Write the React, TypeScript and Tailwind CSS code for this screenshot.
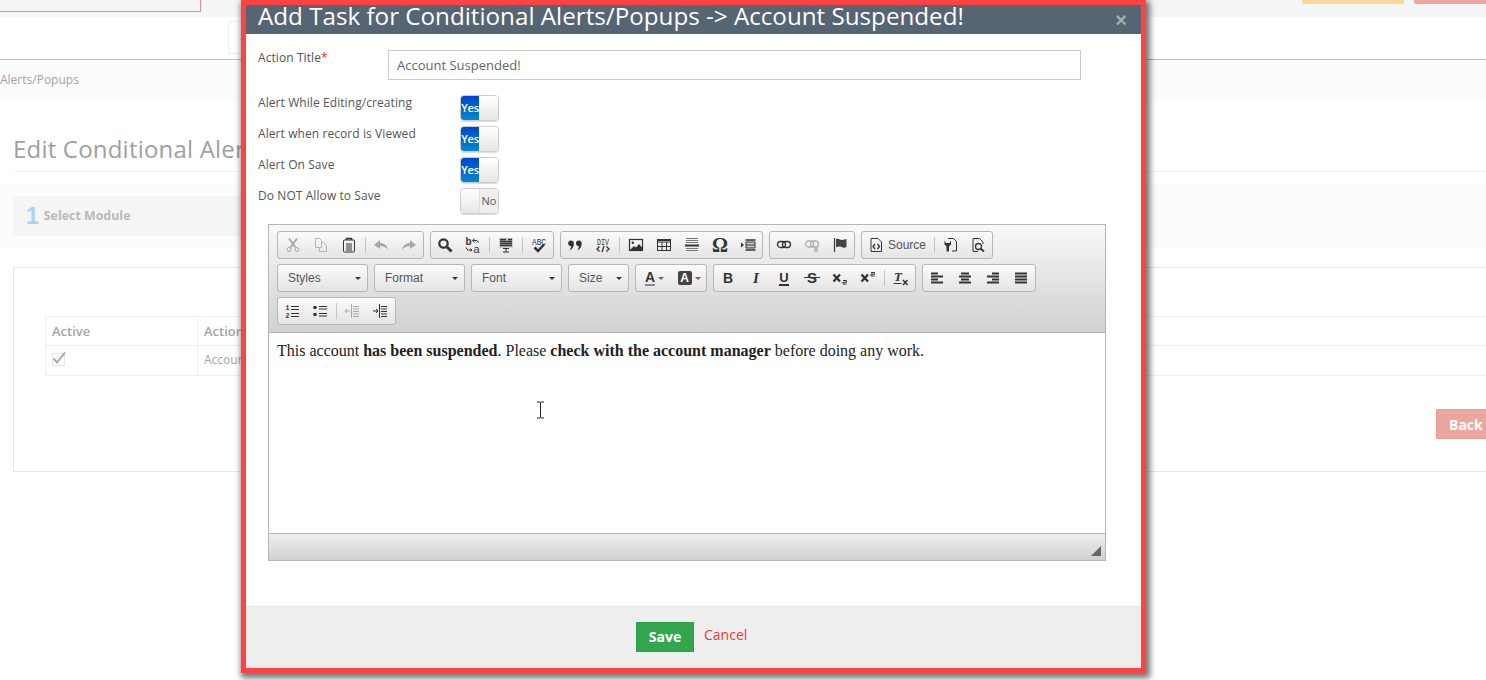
import React from "react";

const I = ({ children, className = "text-[#333]" }: { children: React.ReactNode; className?: string }) => (
  <svg width="16" height="16" viewBox="0 0 16 16" fill="none" stroke="currentColor" strokeWidth="1" className={className}>
    {children}
  </svg>
);

const Btn = ({ children, w = "w-[28px]" }: { children: React.ReactNode; w?: string }) => (
  <div className={`flex h-[26px] ${w} shrink-0 items-center justify-center`}>{children}</div>
);

const Sep = ({ wide = false }: { wide?: boolean }) => (
  <div className={`flex h-[26px] ${wide ? "w-[5px]" : "w-[4px]"} shrink-0 justify-center py-[5px]`}>
    <div className="w-px bg-[#c4c4c4]" />
  </div>
);

const Group = ({ children, w }: { children: React.ReactNode; w: string }) => (
  <div className={`flex h-[28px] ${w} shrink-0 items-center rounded-[3px] border border-[#b6b6b6] bg-linear-to-b from-[#fbfbfb] to-[#e4e4e4]`}>
    {children}
  </div>
);

const Combo = ({ label, w }: { label: string; w: string }) => (
  <div className={`flex h-[28px] ${w} shrink-0 items-center justify-between rounded-[3px] border border-[#b6b6b6] bg-linear-to-b from-[#fbfbfb] to-[#e4e4e4] pl-[10px] pr-[6px] font-['Liberation_Sans',sans-serif] text-[12px] text-[#555]`}>
    <span>{label}</span>
    <span className="h-0 w-0 border-x-[3px] border-t-[3px] border-x-transparent border-t-[#333]" />
  </div>
);

const Caret = () => <span className="ml-[3px] h-0 w-0 border-x-[3px] border-t-[3px] border-x-transparent border-t-[#666]" />;

const Lines = ({ rows }: { rows: [number, number][] }) => (
  <I>
    {rows.map(([a, b], i) => (
      <path key={i} d={`M${a} ${3.5 + i * 3}H${b}`} strokeWidth="2" />
    ))}
  </I>
);

const Cut = () => (
  <I className="text-[#a8a8a8]">
    <path d="M4 1.5l6.5 9M12 1.5l-6.500 9" strokeWidth="2" />
    <circle cx="4" cy="12.5" r="2" />
    <circle cx="12" cy="12.5" r="2" />
  </I>
);
const Copy = () => (
  <I className="text-[#b4b4b4]">
    <path d="M2.5 1.5h4l2 2v7h-6zM8.5 5.5h2l3 3v6h-7v-4" />
  </I>
);
const Paste = () => (
  <I>
    <path d="M3.5 3h9a1 1 0 0 1 1 1v10a1 1 0 0 1-1 1h-9a1 1 0 0 1-1-1V4a1 1 0 0 1 1-1z" />
    <path d="M5.5 3V1.5h5V3" strokeWidth="1.5" />
    <path d="M5 7h6M5 9h6M5 11h6M5 13h6" />
  </I>
);
const Undo = ({ flip = false, cls = "text-[#a8a8a8]" }: { flip?: boolean; cls?: string }) => (
  <I className={cls}>
    <path d={flip ? "M15 8L9 3v3C5 6 2 8 1 13c2-3 5-4 8-4v3z" : "M1 8l6-5v3c4 0 7 2 8 7-2-3-5-4-8-4v3z"} fill="currentColor" stroke="none" />
  </I>
);
const Find = () => (
  <I>
    <circle cx="6.5" cy="6.5" r="4.2" strokeWidth="2.2" />
    <path d="M10 10l4.5 4.5" strokeWidth="2.8" />
  </I>
);
const Replace = () => (
  <svg width="16" height="16" viewBox="0 0 16 16" className="text-[#333]">
    <text x="0.5" y="8" fontSize="10" fontFamily="Liberation Sans" fontWeight="700" fill="currentColor">b</text>
    <text x="8.5" y="15.5" fontSize="11" fontFamily="Liberation Sans" fill="currentColor">a</text>
    <path d="M8 3.500h3.500l2.500 2M9.500 1.500l-2 2 2 2M1 10.500l1.500 2.500H7M5.500 11.500L7 13l-1.500 1.500" fill="none" stroke="currentColor" />
  </svg>
);
const SelectAll = () => (
  <I>
    <rect x="1" y="1" width="14" height="10" fill="#cfcfcf" stroke="none" />
    <path d="M2 2.500h6M10 2.500h4M2 4.500h12M2 6.500h12M2 8.500h12" strokeWidth="1.300" />
    <path d="M5 11.500h6M5 15h6M8 11.500V15" />
  </I>
);
const Spell = () => (
  <svg width="16" height="16" viewBox="0 0 16 16" className="text-[#333]">
    <text x="1" y="7.500" fontSize="8.500" fontFamily="Liberation Mono" fill="currentColor" textLength="14" lengthAdjust="spacingAndGlyphs">ABC</text>
    <path d="M3.500 10.500l3.500 3.500 6-6.500" fill="none" stroke="currentColor" strokeWidth="2.500" />
  </svg>
);
const Quote = () => (
  <svg width="16" height="16" viewBox="0 0 16 16" className="text-[#333]">
    <circle cx="4" cy="6.300" r="2.800" fill="currentColor" />
    <path d="M6.800 6.300c0 3.500-1.300 6-4.300 7.200 1.200-1.600 1.500-3 1.500-4.500z" fill="currentColor" />
    <circle cx="11.800" cy="6.300" r="2.800" fill="currentColor" />
    <path d="M14.600 6.300c0 3.500-1.300 6-4.300 7.200 1.200-1.600 1.500-3 1.500-4.500z" fill="currentColor" />
  </svg>
);
const Div = () => (
  <svg width="16" height="16" viewBox="0 0 16 16" className="text-[#333]">
    <text x="2" y="7.500" fontSize="8.500" fontFamily="Liberation Mono" fill="currentColor" textLength="12" lengthAdjust="spacingAndGlyphs">DIV</text>
    <path d="M4.500 9.500L2 12l2.500 2.500M11.500 9.500L14 12l-2.500 2.500M9 9l-2 6" fill="none" stroke="currentColor" strokeWidth="1.300" />
  </svg>
);
const Img = () => (
  <I>
    <rect x="1.500" y="2.500" width="13" height="11" strokeWidth="1.200" />
    <circle cx="4.800" cy="5.800" r="1.200" fill="currentColor" stroke="none" />
    <path d="M2 13l4-4 2 1.500L11 7l3.500 4v2.500H2z" fill="currentColor" stroke="none" />
  </I>
);
const Table = () => (
  <I>
    <rect x="1.500" y="2.500" width="13" height="11" />
    <path d="M1.500 3.500h13M1.500 5h13" />
    <path d="M1.500 9.500h13M6 5v8.500M10.500 5v8.500" />
  </I>
);
const Hr = () => (
  <I>
    <path d="M2 1.500h12M2 3.500h12M2 5.500h12M2 11.500h12M2 13.500h12" stroke="#777" />
    <path d="M1 8.500h14" strokeWidth="2" />
  </I>
);
const Iframe = () => (
  <I>
    <path d="M1 5.500l3 2.500-3 2.500z" fill="currentColor" stroke="none" />
    <path d="M5.500 3h10M5.500 13h10" strokeWidth="1.600" />
    <path d="M6 5h9v6H6z" strokeWidth="1" fill="#ccc" />
    <path d="M6 8h9" />
  </I>
);
const LinkI = ({ cls = "text-[#333]", x = false }: { cls?: string; x?: boolean }) => (
  <I className={cls}>
    <rect x="1.500" y={x ? 4 : 4.500} width="8" height="6" rx="3" strokeWidth="1.300" />
    <rect x="6.500" y={x ? 4 : 4.500} width="8" height="6" rx="3" strokeWidth="1.300" />
    {x && <path d="M10 10l4 5M14 10l-4 5" strokeWidth="1.300" />}
  </I>
);
const Flag = () => (
  <I>
    <path d="M2.500 1v14" strokeWidth="1.200" />
    <path d="M4 2c3-1 4 1 6 1s3-1 4.500-1v8c-2 1-3 1-5 0s-3 0-5.500 0z" fill="#444" stroke="none" />
  </I>
);
const SourceI = () => (
  <I>
    <path d="M3 1.500h7l3.500 3.500v9.500H3z" />
    <path d="M7 7L5 9.500 7 12M9.500 7l2 2.500-2 2.500" strokeWidth="1.300" />
  </I>
);
const Templates = () => (
  <I>
    <path d="M6 1.500h5.500l3 3v9.500H10" />
    <path d="M2.500 3.500v4l2 2v5h2.500v-5l2-2v-4L7.500 6H4z" fill="currentColor" stroke="none" />
  </I>
);
const Preview = () => (
  <I>
    <path d="M3 1.500h6.500l3.500 3.500v2M3 1.500v13h5" />
    <circle cx="8.500" cy="9.500" r="3" strokeWidth="1.300" />
    <path d="M10.500 11.500l3.500 3" strokeWidth="1.800" />
  </I>
);
const Sub = ({ sup = false }: { sup?: boolean }) => (
  <I>
    <path d="M1.500 4.500l6.500 7M8 4.500l-6.500 7" strokeWidth="2.300" />
    <path d={sup ? "M11 2.500h3.500v1.700H11v1.800h3.500" : "M11 10.500h3.500v1.700H11v1.800h3.500"} strokeWidth="1" />
  </I>
);
const ClearF = () => (
  <svg width="16" height="16" viewBox="0 0 16 16" className="text-[#333]">
    <text x="1" y="11" fontSize="13" fontFamily="Liberation Serif" fontWeight="700" fontStyle="italic" fill="currentColor">T</text>
    <path d="M0.500 13.500h8" stroke="currentColor" />
    <path d="M10 10l4.500 5M14.500 10L10 15" stroke="currentColor" strokeWidth="1.500" fill="none" />
  </svg>
);
const ListOl = () => (
  <svg width="16" height="16" viewBox="0 0 16 16" className="text-[#333]">
    <text x="1.500" y="7" fontSize="6.500" fontFamily="Liberation Mono" fontWeight="700" fill="currentColor">1</text>
    <text x="1.500" y="14.500" fontSize="6.500" fontFamily="Liberation Mono" fontWeight="700" fill="currentColor">2</text>
    <path d="M7 3.500h8M7 6.500h8M7 10.500h8M7 13.500h8" stroke="currentColor" strokeWidth="1.200" />
  </svg>
);
const ListUl = () => (
  <I>
    <circle cx="3" cy="4.500" r="1.800" fill="currentColor" stroke="none" />
    <circle cx="3" cy="11.500" r="1.800" fill="currentColor" stroke="none" />
    <path d="M7 3.500h8M7 6h8M7 10.500h8M7 13h8" strokeWidth="1.200" />
  </I>
);
const Outdent = ({ on = false }: { on?: boolean }) => (
  <I className={on ? "text-[#333]" : "text-[#a8a8a8]"}>
    <path d={on ? "M1 8h5M4 6l2 2-2 2" : "M6 8H1M3 6L1 8l2 2"} />
    <path d="M7.500 1v14" />
    <path d="M9 3.500h6M9 6h6M9 8.500h6M9 11h6M9 13.500h6" />
  </I>
);

const Toggle = ({ on }: { on: boolean }) => (
  <div className="flex h-[26px] w-[39px] overflow-hidden rounded-[4px] border border-[#ccc] shadow-[0_1px_1px_rgba(0,0,0,0.15)]">
    {on ? (
      <>
        <div className="flex w-[18px] items-center justify-center bg-linear-to-b from-[#0044cc] to-[#0088cc] pt-px text-[11px] font-semibold tracking-[-0.2px] text-white">Yes</div>
        <div className="flex-1 bg-linear-to-b from-white to-[#e6e6e6]" />
      </>
    ) : (
      <>
        <div className="w-[19px] border-r border-[#ddd] bg-linear-to-b from-white to-[#e6e6e6]" />
        <div className="flex flex-1 items-center justify-center bg-[#eee] pt-px text-[11px] text-[#555]">No</div>
      </>
    )}
  </div>
);

const ToggleRow = ({ label, on }: { label: string; on: boolean }) => (
  <div className="flex h-[26px] items-start">
    <div className="w-[202px] pt-px text-[12px] leading-[14px] tracking-[0.08px] text-[#555]">{label}</div>
    <Toggle on={on} />
  </div>
);

const Background = () => (
  <div className="w-[1486px]">
    <div className="flex h-[17px] items-start justify-between bg-[#f4f5f7]">
      <div className="h-[12px] w-[201px] border-b border-r border-[#f58a8a]" />
      <div className="flex gap-[10px]">
        <div className="h-[4px] w-[102px] rounded-b-[2px] bg-[#fdd49b]" />
        <div className="h-[4px] w-[72px] rounded-bl-[2px] bg-[#eca6a0]" />
      </div>
    </div>
    <div className="h-[43px] border-b border-[#f2ab98] bg-white pl-[228px] pt-[4px]">
      <div className="h-[33px] w-[30px] border border-[#eee]" />
    </div>
    <div className="flex h-[41px] items-center bg-[#fcfcfc] pb-[2px] text-[12px] text-[#a3a3a3]">Alerts/Popups</div>
    <div className="ml-[13px] h-[71px] border-b border-[#f2f2f2] pt-[31px] text-[24px] leading-[33px] tracking-[0.2px] text-[#a0a0a0]">Edit Conditional Alerts</div>
    <div className="mt-[11px] h-[65px] bg-[#fcfcfc] pl-[13px] pt-[13px]">
      <div className="flex h-[40px] w-[1000px] items-center gap-[6px] bg-[#f5f5f5] pl-[13px]">
        <span className="font-['Liberation_Sans',sans-serif] text-[23px] font-bold text-[#a9d2f7]">1</span>
        <span className="-ml-px text-[12.4px] font-bold text-[#b9b9b9]">Select Module</span>
      </div>
    </div>
    <div className="ml-[13px] mt-[19px] h-[205px] w-[1500px] border border-[#e6e6e6]">
      <div className="ml-[31px] mt-[48px] border-l border-[#eee] text-[13px] text-[#a5a5a5]">
        <div className="flex h-[30px] items-center border-y border-[#eee] font-semibold">
          <div className="flex h-full w-[152px] items-center border-r border-[#eee] pl-[6px] pt-[2px]">Active</div>
          <div className="pl-[6px] pt-[2px]">Action</div>
        </div>
        <div className="flex h-[30px] items-center border-b border-[#eee] text-[12px]">
          <div className="flex h-full w-[152px] items-center border-r border-[#eee] pb-[2px] pl-[6px]">
            <div className="flex h-[13px] w-[13px] items-center justify-center border border-[#e4e4e4]">
              <svg width="14" height="14" viewBox="0 0 14 14" className="-mt-[3px] shrink-0 overflow-visible text-[#a8a8a8]">
                <path d="M1.500 7.500l3.500 4 8-10" fill="none" stroke="currentColor" strokeWidth="2" />
              </svg>
            </div>
          </div>
          <div className="pb-[2px] pl-[6px]">Account Suspended!</div>
        </div>
      </div>
      <div className="ml-[1422px] mt-[33px] flex h-[30px] w-[70px] items-center rounded-[1px] border border-[#e89d96] bg-[#eca6a0] pl-[12px] text-[14px] font-bold text-white">Back</div>
    </div>
  </div>
);

const Editor = () => (
  <div className="ml-[22px] mt-[10px] w-[838px] border border-[#b6b6b6] bg-white">
    <div className="flex h-[108px] flex-col gap-[5px] border-b border-[#b6b6b6] bg-linear-to-b from-[#f8f8f8] to-[#d0d2cf] pl-[8px] pt-[6px]">
      <div className="flex gap-[6px]">
        <Group w="w-[147px] pl-px">
          <Btn><Cut /></Btn>
          <Btn><Copy /></Btn>
          <Btn><Paste /></Btn>
          <Sep />
          <Btn><Undo /></Btn>
          <Btn><Undo flip /></Btn>
        </Group>
        <Group w="w-[124px]">
          <Btn><Find /></Btn>
          <Btn><Replace /></Btn>
          <Sep wide />
          <Btn><SelectAll /></Btn>
          <Sep wide />
          <Btn><Spell /></Btn>
        </Group>
        <Group w="w-[203px]">
          <Btn><Quote /></Btn>
          <Btn><Div /></Btn>
          <Sep wide />
          <Btn><Img /></Btn>
          <Btn><Table /></Btn>
          <Btn><Hr /></Btn>
          <Btn><span className="font-['Liberation_Serif',serif] text-[20px] font-bold leading-none text-[#333]">Ω</span></Btn>
          <Btn><Iframe /></Btn>
        </Group>
        <Group w="w-[86px]">
          <Btn><LinkI /></Btn>
          <Btn><LinkI cls="text-[#b0b0b0]" x /></Btn>
          <Btn><Flag /></Btn>
        </Group>
        <Group w="w-[132px]">
          <Btn w="w-[70px] justify-start pl-[6px] gap-[4px]">
            <SourceI />
            <span className="font-['Liberation_Sans',sans-serif] text-[12px] text-[#555]">Source</span>
          </Btn>
          <Sep />
          <Btn><Templates /></Btn>
          <Btn><Preview /></Btn>
        </Group>
      </div>
      <div className="flex gap-[6px]">
        <Combo label="Styles" w="w-[91px]" />
        <Combo label="Format" w="w-[91px]" />
        <Combo label="Font" w="w-[91px]" />
        <Combo label="Size" w="w-[61px]" />
        <Group w="w-[72px] pl-px">
          <Btn w="w-[35px]">
            <div className="flex items-center">
              <span className="border-b-[2px] border-[#888] font-['Liberation_Sans',sans-serif] text-[14px] font-bold leading-[13px] text-[#333]">A</span>
              <Caret />
            </div>
          </Btn>
          <Btn w="w-[34px]">
            <div className="flex items-center">
              <span className="flex h-[14px] w-[14px] items-center justify-center rounded-[2px] bg-[#444] font-['Liberation_Sans',sans-serif] text-[12px] font-bold text-white">A</span>
              <Caret />
            </div>
          </Btn>
        </Group>
        <Group w="w-[203px]">
          <Btn><span className="font-['Liberation_Sans',sans-serif] text-[14px] font-bold text-[#333]">B</span></Btn>
          <Btn><span className="font-['Liberation_Serif',serif] text-[15px] font-bold italic text-[#333]">I</span></Btn>
          <Btn><span className="border-b-[2px] border-[#333] font-['Liberation_Sans',sans-serif] text-[13px] font-bold leading-[13px] text-[#333]">U</span></Btn>
          <Btn>
            <span className="relative font-['Liberation_Sans',sans-serif] text-[15px] font-bold text-[#333]">
              S
              <span className="absolute left-[-3px] right-[-3px] top-[10px] h-[1px] bg-[#333]" />
            </span>
          </Btn>
          <Btn><Sub /></Btn>
          <Btn><Sub sup /></Btn>
          <Sep wide />
          <Btn><ClearF /></Btn>
        </Group>
        <Group w="w-[114px]">
          <Btn><Lines rows={[[2, 9], [2, 14], [2, 9], [2, 14]]} /></Btn>
          <Btn><Lines rows={[[4, 12], [2, 14], [4, 12], [2, 14]]} /></Btn>
          <Btn><Lines rows={[[7, 14], [2, 14], [7, 14], [2, 14]]} /></Btn>
          <Btn><Lines rows={[[2, 14], [2, 14], [2, 14], [2, 14]]} /></Btn>
        </Group>
      </div>
      <div className="flex">
        <Group w="w-[119px]">
          <Btn><ListOl /></Btn>
          <Btn><ListUl /></Btn>
          <Sep />
          <Btn><Outdent /></Btn>
          <Btn><Outdent on /></Btn>
        </Group>
      </div>
    </div>
    <div className="relative h-[200px] px-[8px] pt-[9px] font-['Liberation_Serif',serif] text-[16px] leading-[18px] text-[#222]">
      This account <b>has been suspended</b>. Please <b>check with the account manager</b> before doing any work.
      <svg width="9" height="18" viewBox="0 0 9 18" className="absolute left-[267px] top-[68px] text-[#222]">
        <path d="M1 1h3l.5.5L5 1h3M4.500 1.500v15M1 17h3l.5-.5.5.5h3" fill="none" stroke="currentColor" />
      </svg>
    </div>
    <div className="relative h-[27px] border-t border-[#b6b6b6] bg-linear-to-b from-[#efefef] to-[#cfd1cf]">
      <svg width="12" height="12" viewBox="0 0 12 12" className="absolute bottom-[3px] right-[3px]">
        <path d="M11 1v10H1z" fill="#666" />
      </svg>
    </div>
  </div>
);

export default function App() {
  return (
    <div className="relative h-[680px] w-[1486px] overflow-hidden bg-white font-['Open_Sans',sans-serif]">
      <Background />
      <div className="absolute left-[241px] top-0 flex h-[673px] w-[905px] flex-col border-[5px] border-[#ff4343] bg-white shadow-[2px_3px_6px_2px_rgba(0,0,0,0.55)]">
        <div className="flex h-[29px] shrink-0 justify-between overflow-hidden bg-[#566573] pl-[12px] pr-[14px]">
          <div className="-mt-[6px] whitespace-nowrap text-[24.2px] leading-[33px] text-white">Add Task for Conditional Alerts/Popups -&gt; Account Suspended!</div>
          <div className="mt-[3px] font-['Liberation_Sans',sans-serif] text-[20px] font-bold leading-[24px] text-[#a4adb5]">×</div>
        </div>
        <div className="flex flex-1 flex-col">
          <div className="flex items-start pl-[12px] pt-[16px]">
            <div className="w-[130px] pt-px text-[12px] leading-[14px] tracking-[0.08px] text-[#555]">
              Action Title<span className="text-[#ef2b2b]">*</span>
            </div>
            <div className="flex h-[30px] w-[693px] items-center border border-[#ccc] pl-[8px] pt-px text-[13px] text-[#666]">Account Suspended!</div>
          </div>
          <div className="flex flex-col gap-[5px] pl-[12px] pt-[15px]">
            <ToggleRow label="Alert While Editing/creating" on />
            <ToggleRow label="Alert when record is Viewed" on />
            <ToggleRow label="Alert On Save" on />
            <ToggleRow label="Do NOT Allow to Save" on={false} />
          </div>
          <Editor />
        </div>
        <div className="flex h-[62px] shrink-0 items-start border-t border-[#e4e4e4] bg-[#eeeeee] pl-[390px] pt-[15px]">
          <div className="flex h-[30px] w-[58px] items-center justify-center border border-[#2f9c47] bg-[#33a64d] pb-[2px] text-[14px] font-bold text-white">Save</div>
          <div className="ml-[10px] mt-[2px] text-[14px] text-[#f33]">Cancel</div>
        </div>
      </div>
    </div>
  );
}
